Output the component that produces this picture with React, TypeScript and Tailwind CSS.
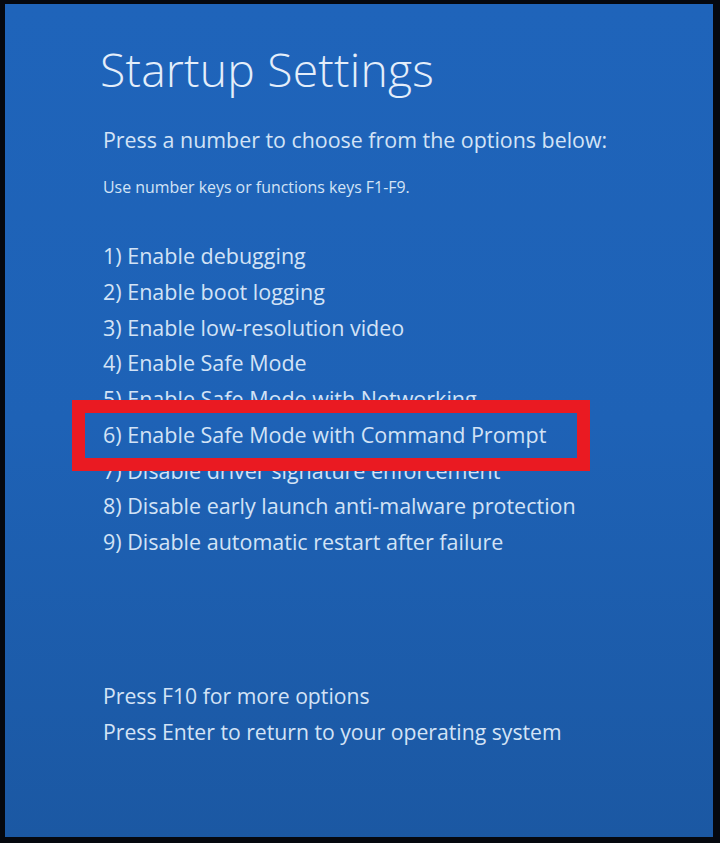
const options = [
  "Enable debugging",
  "Enable boot logging",
  "Enable low-resolution video",
  "Enable Safe Mode",
  "Enable Safe Mode with Networking",
  "Enable Safe Mode with Command Prompt",
  "Disable driver signature enforcement",
  "Disable early launch anti-malware protection",
  "Disable automatic restart after failure",
]

const HIGHLIGHTED = 6

export default function App() {
  return (
    <div className="h-[843px] w-[720px] bg-[#05080f] pt-[4px] pr-[7px] pb-[6px] pl-[5px]">
      <div
        className="flex h-full flex-col bg-gradient-to-b from-[#1f64ba] via-[#1e62b6] to-[#1b58a3] pl-[95px] text-[#d3e3f6]"
        style={{ fontFamily: '"Open Sans", "Noto Sans", sans-serif' }}
      >
        <h1 className="mt-[34px] text-[46.3px] leading-[64px] font-light tracking-[0.2px] text-[#e4eefa]">
          Startup Settings
        </h1>
        <p className="mt-[24px] pl-[3px] text-[21.4px] leading-[28px]">
          Press a number to choose from the options below:
        </p>
        <p className="mt-[22px] pl-[3px] text-[15.9px] leading-[22px]">
          Use number keys or functions keys F1-F9.
        </p>

        <ul className="mt-[40px] pl-[3px]">
          {options.map((label, i) => {
            const n = i + 1
            return (
              <li key={n} className="relative text-[21.5px] leading-[35.75px]">
                {n === HIGHLIGHTED && (
                  <span className="absolute top-[-17px] left-[-31px] z-10 h-[71px] w-[518px] border-[13px] border-[#ea1a22]" />
                )}
                <span className="relative">
                  {n}) {label}
                </span>
              </li>
            )
          })}
        </ul>

        <div className="mt-[118px] pl-[3px] text-[21.2px] leading-[35.75px]">
          <p>Press F10 for more options</p>
          <p>Press Enter to return to your operating system</p>
        </div>
      </div>
    </div>
  )
}
